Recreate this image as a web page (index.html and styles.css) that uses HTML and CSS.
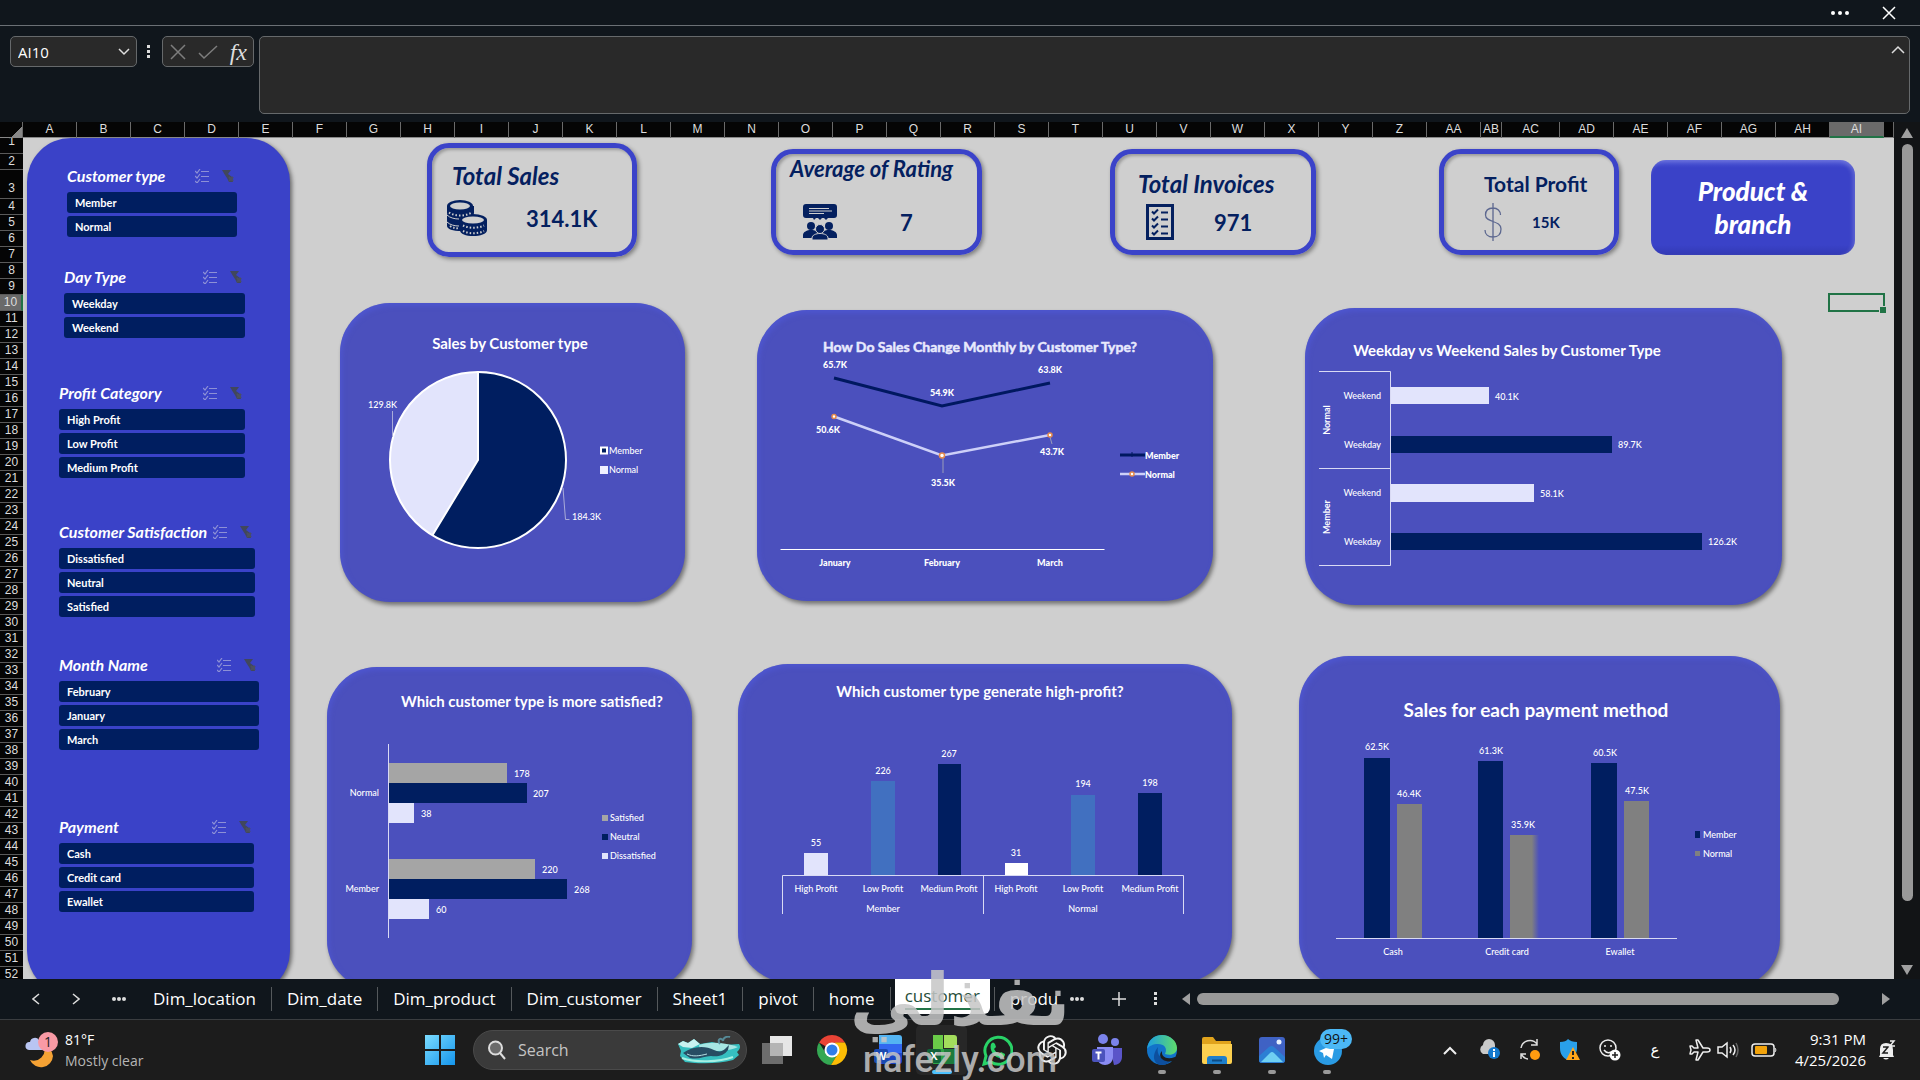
FILE: index.html
```html
<!DOCTYPE html>
<html lang="en">
<head>
    <meta charset="UTF-8">
    <meta name="viewport" content="width=device-width, initial-scale=1.0">
    <title>Sales dashboard - customer</title>
    <link rel="stylesheet" href="styles.css">
</head>
<body>
    <!-- shared icons -->
    <svg class="defs" width="0" height="0" aria-hidden="true">
        <symbol id="multi" viewBox="0 0 14 14">
            <path d="M0 2l2 2 3-4M0 7l2 2 3-4M0 12l2 2 3-4M6 2.500h8M6 7.500h8M6 12.500h8" fill="none" stroke="#8d90d6" stroke-width="1.200"/>
        </symbol>
        <symbol id="clear" viewBox="0 0 14 14">
            <path d="M1 1h9L7 5l4 3 1 5H8L6 9 4 6z" fill="#41475c"/>
            <path d="M8 8l4 4M12 8l-4 4" stroke="#4c5060" stroke-width="2"/>
        </symbol>
    </svg>

    <header class="titlebar">
        <button class="icon-btn" aria-label="More"><svg width="20" height="6" viewBox="0 0 20 6" fill="#fff"><circle cx="3" cy="3" r="2"/><circle cx="10" cy="3" r="2"/><circle cx="17" cy="3" r="2"/></svg></button>
        <button class="icon-btn" aria-label="Close"><svg width="14" height="14" viewBox="0 0 14 14" stroke="#fff" stroke-width="1.500"><path d="M1 1l12 12M13 1L1 13"/></svg></button>
    </header>

    <div class="formula-row">
        <select class="name-box" aria-label="Name box"><option>AI10</option></select>
        <svg class="grip" width="4" height="14" viewBox="0 0 4 14" fill="#ddd"><path d="M0 0h3v3H0zM0 5h3v3H0zM0 10h3v3H0z"/></svg>
        <div class="fx-box">
            <button class="icon-btn" aria-label="Cancel"><svg width="18" height="18" viewBox="0 0 18 18" stroke="#7d7d7d" stroke-width="1.500"><path d="M2 2l14 14M16 2L2 16"/></svg></button>
            <button class="icon-btn" aria-label="Enter"><svg width="20" height="16" viewBox="0 0 20 16" fill="none" stroke="#7d7d7d" stroke-width="1.500"><path d="M1 9l5 5L19 2"/></svg></button>
            <button class="icon-btn fx" aria-label="Insert function">fx</button>
        </div>
        <div class="formula-wrap">
            <textarea class="formula" aria-label="Formula bar"></textarea>
            <svg class="collapse" width="14" height="9" viewBox="0 0 14 9" fill="none" stroke="#ddd" stroke-width="1.500"><path d="M1 8l6-6 6 6"/></svg>
        </div>
    </div>

    <main class="workbook">
        <div class="col-heads">
            <span class="corner"></span>
            <span>A</span><span>B</span><span>C</span><span>D</span><span>E</span><span>F</span><span>G</span><span>H</span><span>I</span><span>J</span><span>K</span><span>L</span><span>M</span><span>N</span><span>O</span><span>P</span><span>Q</span><span>R</span><span>S</span><span>T</span><span>U</span><span>V</span><span>W</span><span>X</span><span>Y</span><span>Z</span><span>AA</span><span>AB</span><span>AC</span><span>AD</span><span>AE</span><span>AF</span><span>AG</span><span>AH</span><span class="active">AI</span><span></span>
        </div>
        <div class="row-heads">
            <span class="first">1</span><span>2</span><span class="tall">3</span><span>4</span><span>5</span><span>6</span><span>7</span><span>8</span><span>9</span><span class="active">10</span>
            <span>11</span><span>12</span><span>13</span><span>14</span><span>15</span><span>16</span><span>17</span><span>18</span><span>19</span><span>20</span>
            <span>21</span><span>22</span><span>23</span><span>24</span><span>25</span><span>26</span><span>27</span><span>28</span><span>29</span><span>30</span>
            <span>31</span><span>32</span><span>33</span><span>34</span><span>35</span><span>36</span><span>37</span><span>38</span><span>39</span><span>40</span>
            <span>41</span><span>42</span><span>43</span><span>44</span><span>45</span><span>46</span><span>47</span><span>48</span><span>49</span><span>50</span>
            <span>51</span><span>52</span>
        </div>

        <div class="sheet">
            <aside class="slicers">
                <section class="slicer customer-type">
                    <header><h3>Customer type</h3><svg class="ic"><use href="#multi"/></svg><svg class="ic"><use href="#clear"/></svg></header>
                    <button>Member</button><button>Normal</button>
                </section>
                <section class="slicer day-type">
                    <header><h3>Day Type</h3><svg class="ic"><use href="#multi"/></svg><svg class="ic"><use href="#clear"/></svg></header>
                    <button>Weekday</button><button>Weekend</button>
                </section>
                <section class="slicer profit-category">
                    <header><h3>Profit Category</h3><svg class="ic"><use href="#multi"/></svg><svg class="ic"><use href="#clear"/></svg></header>
                    <button>High Profit</button><button>Low Profit</button><button>Medium Profit</button>
                </section>
                <section class="slicer satisfaction">
                    <header><h3>Customer Satisfaction</h3><svg class="ic"><use href="#multi"/></svg><svg class="ic"><use href="#clear"/></svg></header>
                    <button>Dissatisfied</button><button>Neutral</button><button>Satisfied</button>
                </section>
                <section class="slicer month">
                    <header><h3>Month Name</h3><svg class="ic"><use href="#multi"/></svg><svg class="ic"><use href="#clear"/></svg></header>
                    <button>February</button><button>January</button><button>March</button>
                </section>
                <section class="slicer payment">
                    <header><h3>Payment</h3><svg class="ic"><use href="#multi"/></svg><svg class="ic"><use href="#clear"/></svg></header>
                    <button>Cash</button><button>Credit card</button><button>Ewallet</button>
                </section>
            </aside>

            <div class="board">
                <div class="kpis">
                    <section class="kpi sales">
                        <h2>Total Sales</h2>
                        <div class="kpi-body">
                            <svg width="42" height="36" viewBox="0 0 42 36" fill="#04205f">
                                <path d="M1 6v7c0 3 5 5 13 5s14-2 14-5V6z"/><ellipse cx="14" cy="6" rx="13" ry="6"/><ellipse cx="14" cy="6" rx="10" ry="3.500" fill="#cfcfcf"/>
                                <path d="M1 14v12c0 3 6 5 14 5V17z"/><path d="M1 15c3 3 8 4 12 4M1 22c3 3 8 4 12 4" fill="none" stroke="#cfcfcf"/>
                                <path d="M14 20v10c0 4 6 6 13 6s14-2 14-6V20z"/><ellipse cx="27" cy="20" rx="14" ry="6"/><ellipse cx="27" cy="20" rx="11" ry="3.500" fill="#cfcfcf"/>
                                <path d="M3 12.500c6 4 16 4 23 0M17 25.500c6 3 15 3 21 0M17 31c6 3 15 3 21 0M4 26c3 2 5 2 9 2.500" fill="none" stroke="#cfcfcf" stroke-width="2" stroke-dasharray="1.500 2"/>
                            </svg>
                            <strong>314.1K</strong>
                        </div>
                    </section>
                    <section class="kpi rating">
                        <h2>Average of Rating</h2>
                        <div class="kpi-body">
                            <svg width="34" height="36" viewBox="0 0 34 36" fill="#04205f">
                                <path d="M3 0h28q3 0 3 3v8q0 3-3 3h-6l-2 2-2-2h-2l-2 2-2-2h-2l-2 2-1-2H3q-3 0-3-3V3q0-3 3-3z"/>
                                <path d="M6 4.500h20M6 7h23M6 9.500h15" stroke="#cfcfcf"/>
                                <circle cx="8" cy="22" r="4"/><circle cx="26" cy="22" r="4"/>
                                <path d="M0 34v-3c0-3 4-5 8-5s8 2 8 5v3zM18 34v-3c0-3 4-5 8-5s8 2 8 5v3z"/>
                                <g stroke="#cfcfcf"><circle cx="17" cy="25" r="4.500"/><path d="M9 36v-2c0-3 4-4.500 8-4.500s8 1.500 8 4.500v2z"/></g>
                            </svg>
                            <strong>7</strong>
                        </div>
                    </section>
                    <section class="kpi invoices">
                        <h2>Total Invoices</h2>
                        <div class="kpi-body">
                            <svg width="28" height="36" viewBox="0 0 28 36" fill="none" stroke="#04205f">
                                <path d="M1.500 1.500h25v33h-25z" stroke-width="3"/>
                                <path d="M6 7.500l2 2 4-4M6 14.500l2 2 4-4M6 21.500l2 2 4-4M6 28.500l2 2 4-4M15 8.500h7M15 15.500h7M15 22.500h7M15 29.500h7" stroke-width="2"/>
                            </svg>
                            <strong>971</strong>
                        </div>
                    </section>
                    <section class="kpi profit">
                        <h2>Total Profit</h2>
                        <div class="kpi-body">
                            <svg width="18" height="38" viewBox="0 0 18 38" fill="none" stroke="#5d6890" stroke-width="1.300">
                                <path d="M9 0v38M16.500 12c0-4-3-7-7.500-7s-7.500 2.500-7.500 7c0 8 15.500 5 15.500 14 0 5-3 8-8 8s-8-3-8-7"/>
                            </svg>
                            <strong>15K</strong>
                        </div>
                    </section>
                    <a class="nav-card" href="#product">Product &amp;<br>branch</a>
                </div>

                <div class="charts top">
                    <section class="card c-pie">
                        <svg viewBox="340 303 345 299" role="img" aria-label="Sales by Customer type">
                            <text class="title mid" x="510" y="343">Sales by Customer type</text>
                            <circle cx="478" cy="460" r="88" fill="#001e60"/>
                            <path d="M478 460V372A88 88 0 0 0 432.400 535.300z" fill="#e2e4fc"/>
                            <g fill="none" stroke="#fff" stroke-width="2"><circle cx="478" cy="460" r="88"/><path d="M478 372v88l-45.600 75.300"/></g>
                            <path d="M392.500 411v26M563 488l2.500 31.500h4" fill="none" stroke="#a9abd9"/>
                            <text x="368" y="404">129.8K</text>
                            <text x="572" y="516">184.3K</text>
                            <path d="M601 447.500h6v6h-6z" fill="#001e60" stroke="#fff" stroke-width="2"/>
                            <text x="609" y="450">Member</text>
                            <path d="M600 466h8v8h-8z" fill="#f0f1ff"/>
                            <text x="609" y="469">Normal</text>
                        </svg>
                    </section>
                    <section class="card c-line">
                        <svg class="bold" viewBox="757 310 456 291" role="img" aria-label="How Do Sales Change Monthly by Customer Type?">
                            <text class="title soft mid" x="980" y="346">How Do Sales Change Monthly by Customer Type?</text>
                            <path d="M834 378l108 28 108-23" fill="none" stroke="#001860" stroke-width="3"/>
                            <path d="M834 416.500l108 39 108-20.500" fill="none" stroke="#cdd0f8" stroke-width="2.500"/>
                            <path d="M943 458v15M1050 437l2 7" stroke="#9a9cb8"/>
                            <g fill="#fff" stroke="#e58a4c" stroke-width="1.500"><circle cx="834" cy="416.500" r="2"/><circle cx="942" cy="455.500" r="2.500"/><circle cx="1050" cy="435" r="2"/></g>
                            <g class="mid">
                                <text x="835" y="364">65.7K</text><text x="942" y="392">54.9K</text><text x="1050" y="369">63.8K</text>
                                <text x="828" y="429">50.6K</text><text x="943" y="482">35.5K</text><text x="1052" y="451">43.7K</text>
                                <text x="835" y="562">January</text><text x="942" y="562">February</text><text x="1050" y="562">March</text>
                            </g>
                            <path d="M780.500 549.500h324" stroke="#fff"/>
                            <path d="M1120 455h25" stroke="#001860" stroke-width="3"/>
                            <path d="M1132 452v5" stroke="#001860"/>
                            <text x="1145" y="455">Member</text>
                            <path d="M1120 474h25" stroke="#cdd0f8" stroke-width="2.500"/>
                            <circle cx="1132" cy="474" r="2" fill="#fff" stroke="#e58a4c" stroke-width="1.500"/>
                            <text x="1145" y="474">Normal</text>
                        </svg>
                    </section>
                    <section class="card c-week">
                        <svg viewBox="1305 308 477 297" role="img" aria-label="Weekday vs Weekend Sales by Customer Type">
                            <text class="title mid" x="1507" y="350">Weekday vs Weekend Sales by Customer Type</text>
                            <path d="M1391 387h98v17h-98zM1391 484h143v18h-143z" fill="#e2e4fc"/>
                            <path d="M1391 436h221v17h-221zM1391 533h311v17h-311z" fill="#001e60"/>
                            <path d="M1319 371.500h71.500v194H1319M1319 468.500h71.500" fill="none" stroke="#d9daf4"/>
                            <g class="end">
                                <text x="1381" y="395">Weekend</text><text x="1381" y="444">Weekday</text>
                                <text x="1381" y="492">Weekend</text><text x="1381" y="541">Weekday</text>
                            </g>
                            <text x="1495" y="396">40.1K</text><text x="1618" y="444">89.7K</text>
                            <text x="1540" y="493">58.1K</text><text x="1708" y="541">126.2K</text>
                            <text class="mid strong" transform="rotate(-90 1326 420)" x="1326" y="420">Normal</text>
                            <text class="mid strong" transform="rotate(-90 1326 517)" x="1326" y="517">Member</text>
                        </svg>
                    </section>
                </div>

                <div class="charts bottom">
                    <section class="card c-satisfied">
                        <svg viewBox="327 667 365 323" role="img" aria-label="Which customer type is more satisfied?">
                            <text class="title mid" x="532" y="701">Which customer type is more satisfied?</text>
                            <path d="M389 763h118v20H389zM389 859h146v20H389z" fill="#a5a5a5"/>
                            <path d="M389 783h138v20H389zM389 879h178v20H389z" fill="#001e60"/>
                            <path d="M389 803h25v20h-25zM389 899h40v20h-40z" fill="#e2e4fc"/>
                            <path d="M388.500 744v194" stroke="#d9daf4"/>
                            <text class="end" x="379" y="792">Normal</text><text class="end" x="379" y="888">Member</text>
                            <text x="514" y="773">178</text><text x="533" y="793">207</text><text x="421" y="813">38</text>
                            <text x="542" y="869">220</text><text x="574" y="889">268</text><text x="436" y="909">60</text>
                            <path d="M602 815h6v6h-6z" fill="#a5a5a5"/><text x="610" y="817">Satisfied</text>
                            <path d="M602 834h6v6h-6z" fill="#001e60"/><text x="610" y="836">Neutral</text>
                            <path d="M602 853h6v6h-6z" fill="#e2e4fc"/><text x="610" y="855">Dissatisfied</text>
                        </svg>
                    </section>
                    <section class="card c-profit">
                        <svg viewBox="738 664 494 318" role="img" aria-label="Which customer type generate high-profit?">
                            <text class="title mid" x="980" y="691">Which customer type generate high-profit?</text>
                            <path d="M804 853h24v22h-24z" fill="#e2e4fc"/>
                            <path d="M1005 863h23v12h-23z" fill="#fff"/>
                            <path d="M871 781h24v94h-24zM1071 795h24v80h-24z" fill="#4170c0"/>
                            <path d="M938 764h23v111h-23zM1138 793h24v82h-24z" fill="#001e60"/>
                            <path d="M782.500 914v-38.500h401V914M983.500 875.500V914" fill="none" stroke="#d9daf4"/>
                            <g class="mid">
                                <text x="816" y="842">55</text><text x="883" y="770">226</text><text x="949" y="753">267</text>
                                <text x="1016" y="852">31</text><text x="1083" y="783">194</text><text x="1150" y="782">198</text>
                                <text x="816" y="888">High Profit</text><text x="883" y="888">Low Profit</text><text x="949" y="888">Medium Profit</text>
                                <text x="1016" y="888">High Profit</text><text x="1083" y="888">Low Profit</text><text x="1150" y="888">Medium Profit</text>
                                <text x="883" y="908">Member</text><text x="1083" y="908">Normal</text>
                            </g>
                        </svg>
                    </section>
                    <section class="card c-payment">
                        <svg viewBox="1299 656 481 332" role="img" aria-label="Sales for each payment method">
                            <defs><linearGradient id="fade"><stop offset="0.750" stop-color="#808080"/><stop offset="1" stop-color="#4b50bd"/></linearGradient></defs>
                            <text class="title big mid" x="1536" y="709">Sales for each payment method</text>
                            <path d="M1364 758h26v180h-26zM1478 761h25v177h-25zM1591 763h26v175h-26z" fill="#001e60"/>
                            <path d="M1397 804h25v134h-25zM1624 801h25v137h-25z" fill="#808080"/>
                            <path d="M1510 835h29v103h-29z" fill="url(#fade)"/>
                            <path d="M1336 938.500h341" stroke="#d9daf4"/>
                            <g class="mid">
                                <text x="1377" y="746">62.5K</text><text x="1409" y="793">46.4K</text>
                                <text x="1491" y="750">61.3K</text><text x="1523" y="824">35.9K</text>
                                <text x="1605" y="752">60.5K</text><text x="1637" y="790">47.5K</text>
                                <text x="1393" y="951">Cash</text><text x="1507" y="951">Credit card</text><text x="1620" y="951">Ewallet</text>
                            </g>
                            <path d="M1695 831h5v7h-5z" fill="#001e60"/><text x="1703" y="834">Member</text>
                            <path d="M1695 851h5v5h-5z" fill="#808080"/><text x="1703" y="853">Normal</text>
                        </svg>
                    </section>
                </div>
            </div>
            <div class="selection"></div>
        </div>

        <div class="vscroll">
            <svg width="12" height="10" viewBox="0 0 12 10"><path d="M6 0l6 10H0z" fill="#a0a0a0"/></svg>
            <div class="thumb"></div>
            <svg width="12" height="10" viewBox="0 0 12 10"><path d="M6 10l6-10H0z" fill="#a0a0a0"/></svg>
        </div>
    </main>

    <nav class="tabs">
        <div class="tab-nav">
            <button class="icon-btn" aria-label="Previous sheet"><svg width="8" height="12" viewBox="0 0 8 12" fill="none" stroke="#ddd" stroke-width="1.500"><path d="M7 1L1 6l6 5"/></svg></button>
            <button class="icon-btn" aria-label="Next sheet"><svg width="8" height="12" viewBox="0 0 8 12" fill="none" stroke="#ddd" stroke-width="1.500"><path d="M1 1l6 5-6 5"/></svg></button>
            <button class="icon-btn" aria-label="All sheets"><svg width="14" height="4" viewBox="0 0 14 4" fill="#ddd"><circle cx="2" cy="2" r="2"/><circle cx="7" cy="2" r="2"/><circle cx="12" cy="2" r="2"/></svg></button>
        </div>
        <a href="#loc">Dim_location</a><a href="#date">Dim_date</a><a href="#prod">Dim_product</a><a href="#cust">Dim_customer</a><a href="#s1">Sheet1</a><a href="#pivot">pivot</a><a href="#home">home</a><a class="current" href="#customer"><span>customer</span></a><a class="cut" href="#product">produ</a>
        <div class="tab-tools">
            <button class="icon-btn" aria-label="More sheets"><svg width="14" height="4" viewBox="0 0 14 4" fill="#ddd"><circle cx="2" cy="2" r="2"/><circle cx="7" cy="2" r="2"/><circle cx="12" cy="2" r="2"/></svg></button>
            <button class="icon-btn" aria-label="New sheet"><svg width="14" height="14" viewBox="0 0 14 14" stroke="#ddd" stroke-width="1.500"><path d="M7 0v14M0 7h14"/></svg></button>
            <svg width="4" height="14" viewBox="0 0 4 14" fill="#ddd"><path d="M0 0h3v3H0zM0 5h3v3H0zM0 10h3v3H0z"/></svg>
        </div>
        <div class="hscroll">
            <svg width="8" height="12" viewBox="0 0 8 12"><path d="M0 6l8-6v12z" fill="#a0a0a0"/></svg>
            <div class="thumb"></div>
            <svg width="8" height="12" viewBox="0 0 8 12"><path d="M8 6L0 0v12z" fill="#a0a0a0"/></svg>
        </div>
    </nav>

    <footer class="taskbar">
        <div class="weather">
            <svg width="34" height="36" viewBox="0 0 34 36">
                <path d="M19 14a11 11 0 0 1-14 14 12 12 0 0 0 23-4 12 12 0 0 0-9-10z" fill="#f5a234"/>
                <path d="M4 18a4 4 0 0 1 1-8 5 5 0 0 1 9-2 5 5 0 0 1 3 10z" fill="#b9c5f2"/>
                <circle cx="23" cy="10" r="10" fill="#f99aa5"/>
                <text x="23" y="15" text-anchor="middle" font-size="14" fill="#222">1</text>
            </svg>
            <p>81°F<br><span>Mostly clear</span></p>
        </div>

        <div class="apps">
            <svg class="win" width="30" height="30" viewBox="0 0 30 30">
                <defs><linearGradient id="wg" x2="1" y2="1"><stop stop-color="#7bdcff"/><stop offset="1" stop-color="#1495ec"/></linearGradient></defs>
                <path d="M0 0h14v14H0zM16 0h14v14H16zM0 16h14v14H0zM16 16h14v14H16z" fill="url(#wg)"/>
            </svg>
            <label class="search">
                <svg width="18" height="20" viewBox="0 0 18 20" fill="#6b6b6b" stroke="#ddd" stroke-width="2"><circle cx="7.500" cy="8" r="6.500"/><path d="M12 13l5 6"/></svg>
                <input type="text" placeholder="Search" aria-label="Search">
                <svg width="64" height="28" viewBox="0 0 64 28">
                    <path d="M1 8l5-3 5 2 6-4 6 5 12-2 12 3 15-1c2 3 1 5-2 8l2 3-6 5c-14 4-34 4-48 2l-5-6 1-5z" fill="#36bfc0"/>
                    <path d="M1 8l5-3 5 2 6-4 6 5-8 4-9-1z" fill="#c8f2f0"/>
                    <path d="M22 9c12-4 28-2 39 2-8 4-24 5-38 3z" fill="#a6e6e3"/>
                    <path d="M6 17c9-7 22-8 31-3 4 2 8 2 11-1l4-4-1 5c-4 6-11 7-17 6-7 0-12 4-21 2z" fill="#274d63"/>
                    <path d="M10 18c6 3 12 2 20 0" fill="none" stroke="#b7dfe4"/>
                    <path d="M43 8c-4-5 2-7 3-3 0-4 5-5 7-4" fill="none" stroke="#568a97" stroke-width="2"/>
                    <path d="M5 22c14 5 37 4 51-1" fill="none" stroke="#a5f0e3" stroke-width="2"/>
                </svg>
            </label>
            <span class="app">
                <svg viewBox="0 0 32 32"><path d="M1 9h21v21H1z" fill="#6d6d6d"/><path d="M9 2h22v20H9z" fill="#e6e6e6"/><path d="M9 9h13v13H9z" fill="#b4b4b4"/></svg>
            </span>
            <span class="app">
                <svg viewBox="0 0 32 32">
                    <path d="M16 16L3 8.500A15 15 0 0 1 29 8.500L16 9z" fill="#e94335"/><path d="M3 8.500A15 15 0 0 0 15 31l7-11.500-12 0z" fill="#34a853"/>
                    <path d="M29 8.500A15 15 0 0 1 15 31l7-11.500L19 8.500z" fill="#fbbc05"/><circle cx="16" cy="16" r="7.500" fill="#fff"/><circle cx="16" cy="16" r="5.500" fill="#2f7de9"/>
                </svg>
            </span>
            <span class="app">
                <svg viewBox="0 0 32 32"><path d="M8 1h20q3 0 3 3v8H8z" fill="#54b4f2"/><path d="M8 10h23v10H8z" fill="#3267f0"/><path d="M8 19h23v8q0 3-3 3H8z" fill="#1c45c4"/><rect x="3" y="15" width="14" height="14" rx="2" fill="#1849b0"/><text x="10" y="26" text-anchor="middle" font-size="11" font-weight="700" fill="#fff">W</text></svg>
            </span>
            <span class="app focused">
                <svg viewBox="0 0 32 32"><path d="M7 1h10v14H7z" fill="#6acb48"/><path d="M18 1h10q3 0 3 3v10H18z" fill="#a3dd5c"/><path d="M18 15h13v12q0 3-3 3H18z" fill="#1d7b3b"/><path d="M7 15h11v15H7z" fill="#2fa346"/><rect x="1" y="15" width="14" height="14" rx="2" fill="#12633a"/><text x="8" y="26" text-anchor="middle" font-size="11" font-weight="700" fill="#fff">X</text></svg>
            </span>
            <span class="app">
                <svg viewBox="0 0 32 32"><path d="M3 30l2-8a13.500 13.500 0 1 1 5 6z" fill="none" stroke="#29d267" stroke-width="3"/><path d="M10 10q2-3 4 0l1 3-2 2q2 4 5 5l2-2 4 2q0 4-4 4c-7 0-12-8-10-14z" fill="#29d267"/></svg>
            </span>
            <span class="app">
                <svg viewBox="-1 -1 26 26"><path fill="#f2f2f2" d="M22.282 9.821a5.985 5.985 0 0 0-.516-4.911 6.046 6.046 0 0 0-6.510-2.900A6.065 6.065 0 0 0 4.981 4.182a5.985 5.985 0 0 0-3.998 2.900 6.046 6.046 0 0 0 .743 7.097 5.980 5.980 0 0 0 .511 4.911 6.051 6.051 0 0 0 6.515 2.900A5.985 5.985 0 0 0 13.260 24a6.056 6.056 0 0 0 5.772-4.206 5.989 5.989 0 0 0 3.998-2.900 6.056 6.056 0 0 0-.748-7.073zm-9.022 12.608a4.476 4.476 0 0 1-2.876-1.041l.142-.080 4.778-2.758a.795.795 0 0 0 .393-.681v-6.737l2.020 1.169a.071.071 0 0 1 .038.052v5.583a4.504 4.504 0 0 1-4.495 4.494zm-9.661-4.125a4.471 4.471 0 0 1-.535-3.014l.142.085 4.783 2.758a.771.771 0 0 0 .781 0l5.843-3.369v2.332a.080.080 0 0 1-.033.062L9.740 19.950a4.499 4.499 0 0 1-6.141-1.646zM2.341 7.896a4.485 4.485 0 0 1 2.366-1.973V11.600a.766.766 0 0 0 .388.677l5.814 3.354-2.020 1.169a.076.076 0 0 1-.071 0l-4.830-2.787A4.504 4.504 0 0 1 2.341 7.872zm16.596 3.856L13.104 8.364 15.119 7.200a.076.076 0 0 1 .071 0l4.830 2.791a4.494 4.494 0 0 1-.677 8.104v-5.677a.790.790 0 0 0-.407-.667zm2.011-3.023l-.142-.085-4.774-2.782a.776.776 0 0 0-.785 0L9.409 9.230V6.897a.066.066 0 0 1 .028-.062l4.830-2.787a4.499 4.499 0 0 1 6.680 4.660zM8.307 12.863l-2.020-1.164a.080.080 0 0 1-.038-.057V6.074a4.499 4.499 0 0 1 7.376-3.454l-.142.081L8.704 5.459a.795.795 0 0 0-.393.681zm1.098-2.365l2.602-1.500 2.607 1.500v2.999l-2.597 1.500-2.607-1.500z"/></svg>
            </span>
            <span class="app">
                <svg viewBox="0 0 32 32"><circle cx="12" cy="5" r="5" fill="#7b83eb"/><circle cx="24" cy="8" r="4" fill="#7b83eb"/><path d="M19 14h12v9c0 5-4 8-8 8z" fill="#5a55c9"/><path d="M6 13h16v10c0 5-4 8-8 8s-8-3-8-8z" fill="#8a8cf3"/><rect x="1" y="15" width="13" height="13" rx="2" fill="#4b53bc"/><path d="M4.500 18.500h6M7.500 18.500v7" stroke="#fff" stroke-width="2"/></svg>
            </span>
            <span class="app running">
                <svg viewBox="0 0 32 32"><defs><linearGradient id="eg" x2="1"><stop stop-color="#1b9de2"/><stop offset="1" stop-color="#5fdc6b"/></linearGradient></defs><circle cx="16" cy="16" r="15" fill="#1273c9"/><path d="M1 15C2 6 8 1 16 1s15 6 15 13c0 6-6 8-12 6 3-6-1-10-7-10-5 0-9 2-11 5z" fill="url(#eg)"/><path d="M12 13c-2 8 4 14 14 13-3 3-6 5-11 5C8 30 5 22 12 13z" fill="#0d4f9e"/><path d="M16 17c-1 6 5 9 13 6l2 1c-3 4-8 4-11 3-5-1-8-6-4-10z" fill="#1c1c1c"/></svg>
            </span>
            <span class="app running">
                <svg viewBox="0 0 32 32"><path d="M1 5q0-2 2-2h9l3 4h15v6H1z" fill="#e0a31c"/><path d="M1 10h30v18q0 2-2 2H3q-2 0-2-2z" fill="#fcd050"/><path d="M6 30v-5q0-3 3-3h14q3 0 3 3v5z" fill="#1e7fcb"/><path d="M11 26.500h10" stroke="#0d4c84" stroke-width="2"/></svg>
            </span>
            <span class="app running">
                <svg viewBox="0 0 32 32"><rect x="3" y="3" width="26" height="26" rx="3" fill="#3f62c4"/><circle cx="23" cy="8" r="2.500" fill="#e8f2ff"/><path d="M3 22l10-9q3-2 5 0l11 10v3q0 3-3 3H6q-3 0-3-3z" fill="#2c7fd4"/><path d="M5 28l9-9q2-2 4 0l9 9z" fill="#6fd0f2"/></svg>
            </span>
            <span class="app running telegram">
                <svg viewBox="0 0 32 32"><circle cx="17" cy="17" r="14" fill="#2a9be4"/><path d="M8 17l16-7-3 15-6-4-2 3-1-5z" fill="#fff"/></svg>
                <em>99+</em>
            </span>
        </div>

        <div class="tray">
            <svg width="14" height="9" viewBox="0 0 14 9" fill="none" stroke="#eee" stroke-width="2"><path d="M1 8l6-6 6 6"/></svg>
            <svg width="22" height="22" viewBox="0 0 22 22"><path d="M4 15a5 5 0 0 1 0-9 6 6 0 0 1 12 0v9z" fill="#c9c9c9"/><circle cx="15" cy="14" r="6" fill="#1379ce"/><path d="M15 10v2M15 13v5" stroke="#fff" stroke-width="2"/></svg>
            <svg width="22" height="22" viewBox="0 0 22 22" fill="none" stroke="#ddd" stroke-width="1.500"><path d="M2 9a9 9 0 0 1 16-4M18 0v6h-6M2 20v-5h5M2 15c2 3 4 5 7 5"/><circle cx="16" cy="16" r="5" fill="#ff9c10" stroke="none"/></svg>
            <svg width="22" height="22" viewBox="0 0 22 22"><path d="M1 3q6 0 8-3 3 3 9 3v6c0 6-4 10-9 12-5-2-8-6-8-12z" fill="#29a0ea"/><path d="M14 8l7 13H7z" fill="#ffa519"/><path d="M14 12v4M14 18v2" stroke="#222" stroke-width="2"/></svg>
            <svg width="22" height="22" viewBox="0 0 22 22" fill="none" stroke="#eee" stroke-width="1.500"><circle cx="9" cy="9" r="8"/><path d="M5 11q3 4 7 2M6 6v2M12 6v2"/><circle cx="16" cy="16" r="5.500" fill="#fff" stroke="none"/><path d="M16 13v6M13 16h6" stroke="#222"/></svg>
            <span class="lang" lang="ar">ع</span>
            <svg width="22" height="22" viewBox="0 0 22 22" fill="none" stroke="#eee" stroke-width="1.500" stroke-linejoin="round"><path d="M21 11q0-2-3-2h-4L9 1H7l2 8H5L3 7H1l1 4-1 4h2l2-2h4l-2 8h2l5-8h4q3 0 3-2z"/></svg>
            <svg width="22" height="18" viewBox="0 0 22 18" fill="none" stroke="#eee" stroke-width="1.500"><path d="M1 6h4l5-4v14l-5-4H1zM13 6q2 3 0 6M16 4q4 5 0 10"/><path d="M19 2q4 7 0 14" stroke="#666"/></svg>
            <svg width="26" height="14" viewBox="0 0 26 14"><rect x="1" y="1" width="22" height="12" rx="3" fill="none" stroke="#eee" stroke-width="1.500"/><path d="M24 5q2 2 0 4" stroke="#eee" fill="none"/><rect x="4" y="3" width="12" height="8" rx="1" fill="#f2a30b"/></svg>
            <p class="clock">9:31 PM<br>4/25/2026</p>
            <svg width="18" height="20" viewBox="0 0 18 20" fill="#eee"><path d="M2 15V9q0-6 6-6 7 0 7 7v5l1 2H1zM5 18h6q-3 3-6 0z"/><path d="M5 7h5l-5 6h5" fill="none" stroke="#1c1c1c" stroke-width="1.500"/><path d="M12 1h4l-4 5h5" fill="none" stroke="#eee" stroke-width="1.500"/></svg>
        </div>
    </footer>

    <div class="watermark"><b lang="ar">نفذلي</b><span>nafezly.com</span></div>
</body>
</html>
```
FILE: styles.css
```css
* {
    box-sizing: border-box;
}
body {
    margin: 0;
    height: 100vh;
    display: flex;
    flex-direction: column;
    overflow: hidden;
    background-color: #10161c;
    color: #fff;
    font-family: "Open Sans", "Noto Sans", sans-serif;
}
svg {
    display: block;
    flex: none;
}
.defs {
    position: absolute;
}
h2, h3, p {
    margin: 0;
}
a {
    color: inherit;
    text-decoration: none;
}
button {
    font-family: inherit;
    color: inherit;
    border: none;
    cursor: pointer;
}
.icon-btn {
    display: flex;
    padding: 0;
    background: none;
}

/* title and formula bars */
.titlebar {
    height: 26px;
    display: flex;
    justify-content: flex-end;
    align-items: center;
    gap: 32px;
    padding-right: 24px;
    border-bottom: 1px solid #6b7075;
}
.formula-row {
    height: 96px;
    display: flex;
    align-items: flex-start;
    padding: 10px 10px 8px;
}
.name-box, .fx-box, .formula-wrap {
    border: 1px solid #66696b;
    border-radius: 5px;
    background-color: #292929;
}
.name-box {
    width: 127px;
    height: 31px;
    padding: 0 7px;
    color: #fff;
    font-family: inherit;
    font-size: 15px;
    appearance: none;
    background-image: url("data:image/svg+xml,%3Csvg xmlns='http://www.w3.org/2000/svg' width='12' height='8' fill='none' stroke='%23ddd' stroke-width='1.5'%3E%3Cpath d='M1 1l5 5 5-5'/%3E%3C/svg%3E");
    background-repeat: no-repeat;
    background-position: right 6px center;
}
.grip {
    margin: 9px 11px 0 10px;
}
.fx-box {
    width: 92px;
    height: 31px;
    display: flex;
    align-items: center;
    justify-content: space-between;
    padding: 0 6px;
}
.fx {
    font: italic 400 24px/24px "Liberation Serif", serif;
    color: #ddd;
}
.formula-wrap {
    flex: 1;
    height: 78px;
    margin-left: 5px;
    display: flex;
    padding: 8px 4px 0 10px;
}
.formula {
    flex: 1;
    border: none;
    outline: none;
    resize: none;
    background: none;
    color: #fff;
}

/* workbook grid */
.workbook {
    flex: 1;
    min-height: 0;
    display: grid;
    grid-template: 16px minmax(0, 1fr) / 23px minmax(0, 1fr) 26px;
}
.col-heads {
    grid-column: 1 / 3;
    display: grid;
    grid-template-columns: 23px repeat(27, 54fr) 21fr 58fr repeat(6, 54fr) 10fr;
    background-color: #050505;
    color: #ddd;
    font: 12px/14px "Liberation Sans", sans-serif;
    text-align: center;
    border-bottom: 1px solid #888;
}
.col-heads span {
    border-right: 1px solid #6a6a6a;
    white-space: nowrap;
}
.col-heads .corner {
    background: linear-gradient(135deg, transparent 70%, #888 70%);
}
.col-heads .active {
    background-color: #6a6a6a;
    border-bottom: 2px solid #217346;
}
.row-heads {
    overflow: hidden;
    display: flex;
    flex-direction: column;
    background-color: #050505;
    color: #ddd;
    font: 12px/15px "Liberation Sans", sans-serif;
    text-align: center;
}
.row-heads span {
    flex: none;
    height: 16px;
    border-bottom: 1px solid #5a5a5a;
}
.row-heads .first {
    line-height: 7px;
}
.row-heads .tall {
    height: 29px;
    padding-top: 11px;
}
.row-heads .active {
    background-color: #6a6a6a;
    border-right: 2px solid #217346;
}
.sheet {
    position: relative;
    overflow: hidden;
    display: flex;
    align-items: flex-start;
    background-color: #cfcfcf;
    font-family: Lato, "Open Sans", sans-serif;
}
.selection {
    position: absolute;
    top: 155px;
    right: 9px;
    width: 57px;
    height: 19px;
    border: 2px solid #217346;
}
.selection::after {
    content: "";
    position: absolute;
    right: -4px;
    bottom: -4px;
    width: 6px;
    height: 6px;
    background-color: #217346;
    border: 1px solid #cfcfcf;
}
.vscroll {
    grid-row: 1 / 3;
    grid-column: 3;
    display: flex;
    flex-direction: column;
    align-items: center;
    gap: 6px;
    padding: 6px 0 4px;
    background-color: #121416;
}
.vscroll .thumb {
    width: 11px;
    flex: 1;
    margin-bottom: 58px;
    border-radius: 6px;
    background-color: #999;
}

/* slicers */
.slicers {
    width: 263px;
    height: 857px;
    flex: none;
    margin-left: 4px;
    padding-top: 26px;
    border-radius: 44px;
    background-color: #3a42c8;
    box-shadow: 2px 2px 4px rgba(0,0,0,0.5);
}
.slicer {
    display: flex;
    flex-direction: column;
    gap: 3px;
    margin-left: 32px;
}
.slicer header {
    height: 24px;
    margin-bottom: 1px;
    display: flex;
    align-items: center;
    gap: 12px;
    padding-right: 2px;
}
.slicer h3 {
    flex: 1;
    min-width: 0;
    font-size: 16px;
    line-height: 24px;
    font-style: italic;
    white-space: nowrap;
}
.ic {
    width: 14px;
    height: 14px;
}
.slicer button {
    height: 21px;
    padding: 0 8px;
    border-radius: 3px;
    background-color: #001e60;
    text-align: left;
    font-size: 11px;
    font-weight: 700;
    line-height: 16px;
}
.customer-type {
    width: 170px;
    margin-left: 40px;
}
.day-type {
    width: 181px;
    margin: 28px 0 0 37px;
}
.profit-category {
    width: 186px;
    margin-top: 43px;
}
.satisfaction {
    width: 196px;
    margin-top: 42px;
}
.month {
    width: 200px;
    margin-top: 36px;
}
.payment {
    width: 195px;
    margin-top: 65px;
}

/* kpi cards */
.board {
    flex: 1;
    min-width: 0;
}
.kpis {
    display: grid;
    grid-template-columns: 137fr 210fr 134fr 211fr 128fr 206fr 123fr 180fr 32fr 204fr 39fr;
    align-items: start;
    height: 165px;
    padding-top: 11px;
    color: #04205f;
}
.kpi {
    height: 106px;
    border: 5px solid #3b43c9;
    border-radius: 22px;
    box-shadow: 2px 2px 4px rgba(0,0,0,0.4), inset 2px 2px 3px rgba(0,0,0,0.25);
}
.kpi h2 {
    font-size: 24px;
    line-height: 28px;
    font-style: italic;
    white-space: nowrap;
}
.kpi-body {
    height: 40px;
    display: flex;
    align-items: center;
}
.kpi strong {
    font-size: 22px;
}
.sales {
    grid-column: 2;
    height: 114px;
    margin-top: -6px;
    padding: 14px 0 0 14px;
}
.sales h2 {
    padding-left: 6px;
}
.sales .kpi-body {
    margin-top: 8px;
    gap: 38px;
}
.rating {
    grid-column: 4;
    padding: 1px 0 0 14px;
}
.rating h2 {
    font-size: 22px;
}
.rating .kpi-body {
    margin-top: 19px;
    padding-left: 13px;
    gap: 63px;
}
.invoices {
    grid-column: 6;
    padding: 16px 0 0 23px;
}
.invoices .kpi-body {
    margin-top: 4px;
    padding-left: 8px;
    gap: 40px;
}
.profit {
    grid-column: 8;
    padding: 16px 0 0 40px;
}
.profit h2 {
    font-size: 21px;
    font-style: normal;
}
.profit .kpi-body {
    margin-top: 4px;
    gap: 30px;
}
.profit strong {
    font-size: 15px;
}
.nav-card {
    grid-column: 10;
    height: 95px;
    margin-top: 11px;
    padding-top: 15px;
    border-radius: 15px;
    background: linear-gradient(to bottom, #4c55d6, #3a42c8 8px, #3a42c8 85px, #3239b4);
    box-shadow: inset -2px 2px 4px rgba(255,255,255,0.2);
    color: #fff;
    font-size: 26px;
    line-height: 33px;
    font-weight: 900;
    font-style: italic;
    text-align: center;
}

/* chart cards */
.charts {
    display: grid;
    align-items: start;
}
.charts.top {
    grid-template-columns: 50fr 345fr 72fr 456fr 92fr 477fr 112fr;
    height: 353px;
}
.charts.bottom {
    grid-template-columns: 37fr 365fr 46fr 494fr 67fr 481fr 114fr;
}
.card {
    border-radius: 50px;
    background-color: #4b50bd;
    box-shadow: 2px 3px 4px rgba(0,0,0,0.45), inset 2px 3px 5px rgba(80,90,220,0.6);
}
.card svg {
    width: 100%;
    height: auto;
}
.card:nth-child(1) {
    grid-column: 2;
}
.card:nth-child(2) {
    grid-column: 4;
}
.card:nth-child(3) {
    grid-column: 6;
}
.c-line {
    margin-top: 7px;
}
.c-week {
    margin-top: 5px;
}
.c-satisfied {
    margin-top: 11px;
}
.c-profit {
    margin-top: 8px;
}
.card text {
    fill: #fff;
    font-size: 9px;
    font-weight: 500;
    dominant-baseline: central;
}
.card .strong {
    font-weight: 700;
}
.card .bold text {
    font-weight: 900;
}
.card text.title {
    font-size: 15px;
    font-weight: 700;
}
.card text.soft {
    font-size: 14px;
    fill: #e8eafd;
    stroke: #e8eafd;
    stroke-width: 0.5px;
}
.card text.big {
    font-size: 19px;
}
.mid {
    text-anchor: middle;
}
.end {
    text-anchor: end;
}

/* sheet tabs */
.tabs {
    height: 41px;
    display: flex;
    align-items: center;
    border-bottom: 1px solid #3a3d40;
    font-size: 17px;
}
.tab-nav {
    width: 138px;
    display: flex;
    align-items: center;
    gap: 32px;
    padding-left: 32px;
}
.tabs a {
    height: 24px;
    padding: 0 15px;
    line-height: 24px;
    border-right: 1px solid #55595c;
}
.tabs a.current {
    align-self: flex-start;
    height: 35px;
    margin: 0 4px;
    padding: 5px 10px;
    border: none;
    border-radius: 0 0 6px 6px;
    background-color: #fff;
    color: #1f4d38;
}
.tabs .current span {
    display: block;
    height: 26px;
    border-bottom: 2px solid #217346;
}
.tabs a.cut {
    padding-right: 0;
    border-left: 1px solid #55595c;
    border-right: none;
}
.tab-tools {
    display: flex;
    align-items: center;
    gap: 28px;
    margin: 0 24px 0 12px;
}
.hscroll {
    flex: 1;
    display: flex;
    align-items: center;
    gap: 7px;
    margin-right: 30px;
}
.hscroll .thumb {
    flex: 1;
    height: 12px;
    margin-right: 36px;
    border-radius: 6px;
    background-color: #999;
}

/* taskbar */
.taskbar {
    height: 60px;
    display: flex;
    align-items: center;
    background-color: #1c1c1c;
    font-size: 15px;
    line-height: 21px;
}
.weather {
    width: 425px;
    display: flex;
    align-items: center;
    gap: 6px;
    padding-left: 25px;
    font-size: 14px;
}
.weather span {
    color: #b5b5b5;
}
.apps {
    flex: 1;
    display: flex;
    align-items: center;
}
.search {
    width: 274px;
    height: 40px;
    margin: 0 4px 0 18px;
    display: flex;
    align-items: center;
    padding: 0 5px 0 14px;
    border: 1px solid #4a4a4a;
    border-radius: 20px;
    background-color: #3a3a3a;
}
.search input {
    flex: 1;
    min-width: 0;
    padding: 0 0 0 12px;
    border: none;
    outline: none;
    background: none;
    color: #fff;
    font: 16px "Open Sans", sans-serif;
}
.search input::placeholder {
    color: #c4c4c4;
}
.app {
    position: relative;
    width: 51px;
    height: 50px;
    margin-right: 4px;
    display: flex;
    align-items: center;
    justify-content: center;
}
.app svg {
    width: 32px;
    height: 32px;
}
.focused {
    border-radius: 5px;
    background-color: #272727;
}
.running::after, .focused::after {
    content: "";
    position: absolute;
    left: 50%;
    bottom: 1px;
    width: 8px;
    height: 4px;
    margin-left: -4px;
    border-radius: 2px;
    background-color: #999;
}
.focused::after {
    width: 20px;
    margin-left: -10px;
    background-color: #4cc2ff;
}
.telegram em {
    position: absolute;
    left: 19px;
    top: 4px;
    padding: 0 4px;
    border-radius: 10px;
    background-color: #4cb8f5;
    color: #111;
    font-style: normal;
    font-size: 14px;
    line-height: 20px;
}
.tray {
    display: flex;
    align-items: center;
    gap: 18px;
    padding-right: 24px;
}
.tray svg:first-child {
    margin-right: 4px;
}
.lang {
    width: 32px;
    text-align: center;
    font-family: "DejaVu Sans", sans-serif;
}
.tray svg:nth-of-type(n+7) {
    margin-left: -12px;
}
.tray svg:nth-of-type(n+8) {
    margin-left: -6px;
}
.tray svg:last-child {
    margin-left: -6px;
}
.clock {
    text-align: right;
}

/* watermark over the tabs and taskbar */
.watermark {
    position: absolute;
    left: 50%;
    bottom: 2px;
    margin-left: -110px;
    width: 220px;
    display: flex;
    flex-direction: column;
    align-items: center;
    color: #c6c6c6;
    opacity: 0.85;
    pointer-events: none;
}
.watermark b {
    font: 700 72px/84px "DejaVu Sans", sans-serif;
}
.watermark span {
    font: 500 36px/36px Roboto, sans-serif;
}
```
